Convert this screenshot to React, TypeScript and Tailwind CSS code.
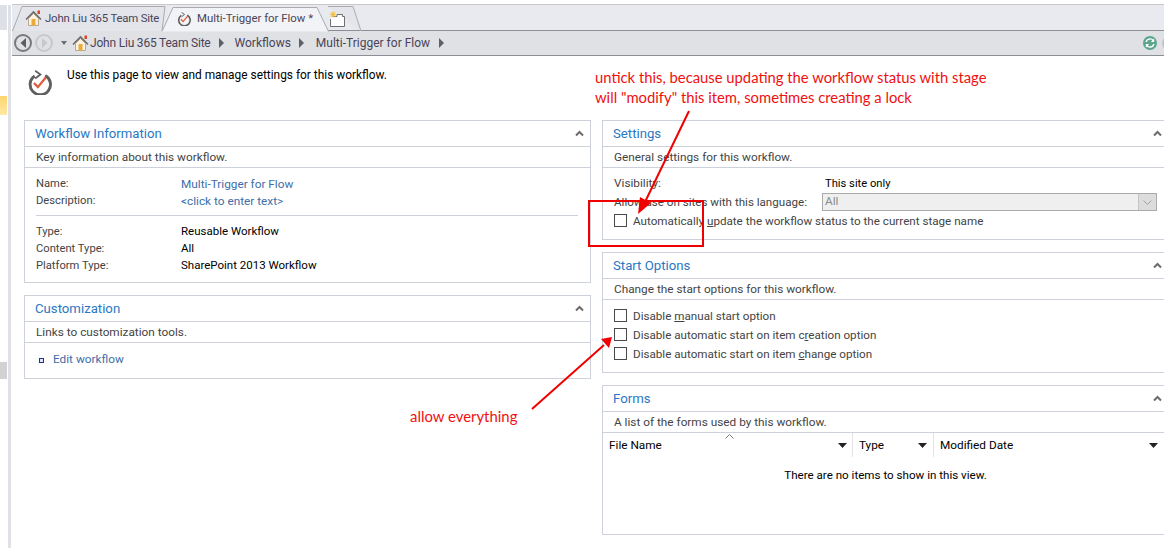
import React from "react";

const HomeIcon = () => (
  <svg width="17" height="17" viewBox="0 0 17 17">
    <path d="M3.5 8.5V15.5H13.5V8.5L8.5 3.5Z" fill="#fbf3df" stroke="#b9a98c" strokeWidth="1" />
    <rect x="6.5" y="9" width="4" height="6.5" fill="#eda93c" />
    <path d="M1 9.5L8.5 2L16 9.5" fill="none" stroke="#6d6d6d" strokeWidth="1.6" />
    <rect x="12.5" y="0.5" width="2.5" height="3.5" fill="#d9442b" />
  </svg>
);

const WorkflowIcon = ({ size }: { size: number }) => (
  <svg width={size} height={size} viewBox="0 0 26 26">
    <path d="M8 6.2A10.6 10.6 0 1 0 19 5.8" fill="none" stroke="#5f5f5f" strokeWidth="3" />
    <path d="M8.5 0.8L14 4.6L8.5 8.8" fill="none" stroke="#5f5f5f" strokeWidth="1.8" />
    <path d="M7.3 13.5L11.3 17.8L19.7 7.5" fill="none" stroke="#df5b3e" strokeWidth="2.4" />
  </svg>
);

const NewTabIcon = () => (
  <svg width="17" height="17" viewBox="0 0 17 17">
    <path d="M3.5 5.5H8V3.5H13.5V5.5H15.5V15.5H1.5V8" fill="#fff" stroke="#6f6f6f" strokeWidth="1" />
    <circle cx="4" cy="3.5" r="2.2" fill="#f8c34c" />
    <path d="M4 0V7M0.5 3.5H7.5M1.5 1L6.5 6M6.5 1L1.5 6" stroke="#f8c34c" strokeWidth="0.7" />
  </svg>
);

const Crumb = () => (
  <svg width="5" height="10" viewBox="0 0 5 10" className="shrink-0">
    <path d="M0 0L5 5L0 10Z" fill="#5d6066" />
  </svg>
);

const NavButton = ({ disabled }: { disabled?: boolean }) => (
  <span
    className={`flex h-[18px] w-[18px] items-center justify-center rounded-full border-2 ${
      disabled ? "border-[#c6c8cc]" : "border-[#77797d]"
    }`}
  >
    {disabled ? (
      <svg width="7" height="10" viewBox="0 0 7 10">
        <path d="M1 0L6.5 5L1 10Z" fill="#c6c8cc" />
      </svg>
    ) : (
      <svg width="7" height="10" viewBox="0 0 7 10">
        <path d="M6 0L0.5 5L6 10Z" fill="#5b5d61" />
      </svg>
    )}
  </span>
);

const Chevron = () => (
  <svg width="9" height="7" viewBox="0 0 9 7">
    <path d="M1 5.5L4.5 2L8 5.5" fill="none" stroke="#6c6c6c" strokeWidth="2" />
  </svg>
);

const Panel = ({
  title,
  desc,
  bodyClass,
  children,
}: {
  title: string;
  desc: string;
  bodyClass: string;
  children: React.ReactNode;
}) => (
  <section className="border border-[#cdd1d9] bg-white">
    <div className="flex h-[26px] items-center justify-between border-b border-[#cdd1d9] pl-[10px] pr-[6px]">
      <h2 className="text-[13.2px] leading-none text-[#2a78c4]">{title}</h2>
      <Chevron />
    </div>
    <p className="flex h-[21px] items-center border-b border-[#cdd1d9] pl-[11px] pt-[1px] text-[#444]">{desc}</p>
    <div className={bodyClass}>{children}</div>
  </section>
);

const Row = ({ label, value, link }: { label: string; value: string; link?: boolean }) => (
  <div className="flex h-[17px] items-center">
    <span className="w-[145px] text-[11.2px] text-[#444]">{label}</span>
    <span className={link ? "pt-[2px] text-[#3e6ea8]" : "text-[11.5px] text-black"}>{value}</span>
  </div>
);

const Check = ({ children }: { children: React.ReactNode }) => (
  <label className="flex h-[19px] items-center text-[11.65px] text-[#444]">
    <span className="mr-[6px] h-[13px] w-[13px] border border-[#4a4a4a] bg-white" />
    <span className="pt-[3px]">{children}</span>
  </label>
);

const ColHead = ({ label, className }: { label: string; className: string }) => (
  <div className={`flex h-[24px] items-center justify-between text-black ${className}`}>
    <span className="pt-[1px]">{label}</span>
    <svg width="9" height="5" viewBox="0 0 9 5">
      <path d="M0 0H9L4.5 5Z" fill="#222" />
    </svg>
  </div>
);

export default function App() {
  return (
    <div className="relative flex h-[548px] w-[1164px] overflow-hidden bg-white font-['Roboto',sans-serif] text-[11.8px] leading-none">
      {/* office nav pane stub */}
      <aside className="flex w-[12px] shrink-0 pt-[5px]">
        <div className="flex w-[7px] flex-col">
          <div className="h-[25px] bg-[#dde0e7]" />
          <div className="mt-[66px] h-[19px] bg-gradient-to-b from-[#fdd56e] to-[#ffe9a6]" />
          <div className="mt-[247px] h-[17px] bg-[#d2d2d2]" />
        </div>
        <div className="ml-[1px] w-[3px] bg-[#dfe1e7]" />
      </aside>

      <main className="min-w-0 flex-1 overflow-hidden">
        <div className="h-[5px] border-b border-[#c8c8c8]" />

        <div className="flex h-[26px] border-b border-[#8b8e93] bg-[#e8eaef] text-[11.4px] text-[#4a4458]">
          <div className="relative flex w-[154px] items-center pl-[13px]">
            <svg className="absolute left-0 top-0" width="154" height="26" viewBox="0 0 154 26">
              <path d="M0.5 26L10 1.5H153L150 26" fill="#e3e5ea" stroke="#a9abb0" />
            </svg>
            <span className="relative mt-[2px]"><HomeIcon /></span>
            <span className="relative ml-[3px] mt-[2px] whitespace-nowrap tracking-[-0.2px]">John Liu 365 Team Site</span>
          </div>
          <div className="relative z-10 -ml-[4px] flex w-[168px] items-center pl-[15px]">
            <svg className="absolute left-0 top-0" width="168" height="27" viewBox="0 0 168 27">
              <path d="M0 26.5L11 2.5H155L166.5 26.5" fill="#f2f3f6" stroke="#a9abb0" />
            </svg>
            <span className="relative mt-[3px]"><WorkflowIcon size={14} /></span>
            <span className="relative ml-[6px] mt-[2px] whitespace-nowrap">Multi-Trigger for Flow *</span>
          </div>
          <div className="relative -ml-[4px] flex w-[36px] items-center pl-[3px]">
            <svg className="absolute left-0 top-0" width="36" height="26" viewBox="0 0 36 26">
              <path d="M2 1.5H27L35 26" fill="#e3e5ea" stroke="#a9abb0" />
            </svg>
            <span className="relative mt-[3px]"><NewTabIcon /></span>
          </div>
        </div>

        <nav className="flex h-[25px] items-center border-b border-[#8b8e93] bg-[#dfe1e5] pl-[2px] text-[12px] text-[#4a4458]">
          <NavButton />
          <span className="ml-[3px]"><NavButton disabled /></span>
          <svg className="ml-[8px]" width="6" height="4" viewBox="0 0 6 4">
            <path d="M0 0H6L3 4Z" fill="#6b6d71" />
          </svg>
          <span className="ml-[5px]"><HomeIcon /></span>
          <span className="ml-[1px] tracking-[-0.2px]">John Liu 365 Team Site</span>
          <span className="ml-[8px]"><Crumb /></span>
          <span className="ml-[11px]">Workflows</span>
          <span className="ml-[8px]"><Crumb /></span>
          <span className="ml-[12px]">Multi-Trigger for Flow</span>
          <span className="ml-[9px]"><Crumb /></span>
          <svg className="ml-auto shrink-0" width="14" height="14" viewBox="0 0 14 14">
            <circle cx="7" cy="7" r="7" fill="#5aa58c" />
            <path d="M3 6A4.2 4.2 0 0 1 10.4 4.6M11 8A4.2 4.2 0 0 1 3.6 9.4" fill="none" stroke="#fff" strokeWidth="1.4" />
            <path d="M11.2 2.4V6H7.8ZM2.8 11.6V8H6.2Z" fill="#fff" />
          </svg>
          <span className="-mr-[12px] ml-[5px] h-[14px] w-[14px] shrink-0 rounded-full bg-[#c2c4c8]" />
        </nav>

        <div className="flex h-[64px] pl-[15px]">
          <span className="mt-[14px]"><WorkflowIcon size={25} /></span>
          <p className="ml-[15px] mt-[14px] text-[11.9px] text-black">Use this page to view and manage settings for this workflow.</p>
        </div>

        <div className="ml-[12px] grid w-[1145px] grid-cols-[567px_567px] gap-x-[11px]">
          <div className="flex flex-col gap-y-[12px]">
            <Panel
              title="Workflow Information"
              desc="Key information about this workflow."
              bodyClass="h-[114px] px-[11px] pt-[7px]"
            >
              <Row label="Name:" value="Multi-Trigger for Flow" link />
              <Row label="Description:" value="<click to enter text>" link />
              <div className="mb-[7px] mr-[1px] mt-[6px] h-px bg-[#cdd1d9]" />
              <Row label="Type:" value="Reusable Workflow" />
              <Row label="Content Type:" value="All" />
              <Row label="Platform Type:" value="SharePoint 2013 Workflow" />
            </Panel>
            <Panel
              title="Customization"
              desc="Links to customization tools."
              bodyClass="flex h-[35px] items-center pb-[1px] pl-[14px]"
            >
              <span className="mr-[9px] h-[5px] w-[5px] border border-[#1f2f9c] bg-[#dfe6f6]" />
              <span className="text-[#3e6ea8]">Edit workflow</span>
            </Panel>
          </div>

          <div className="flex flex-col gap-y-[12px]">
            <Panel
              title="Settings"
              desc="General settings for this workflow."
              bodyClass="h-[71px] pl-[11px] pt-[5px]"
            >
              <div className="flex h-[19px] items-center pt-[3px]">
                <span className="w-[211px] text-[#444]">Visibility:</span>
                <span className="text-[11.2px] text-black">This site only</span>
              </div>
              <div className="flex h-[19px] items-end">
                <span className="w-[208px] self-center whitespace-nowrap pt-[3px] text-[11.6px] text-[#444]">Allow use on sites with this language:</span>
                <div className="flex h-[18px] w-[335px] items-center justify-between border border-[#ababab] bg-[#efefef] pl-[2px] text-[#8b8b8b]">
                  <span>All</span>
                  <span className="flex h-full w-[18px] items-center justify-center border-l border-[#c4c4c4] bg-[#dcdcdc]">
                    <svg width="9" height="5" viewBox="0 0 9 5">
                      <path d="M0.5 0.5L4.5 4.5L8.5 0.5" fill="none" stroke="#a2a2a2" />
                    </svg>
                  </span>
                </div>
              </div>
              <Check>
                Automatically <u>u</u>pdate the workflow status to the current stage name
              </Check>
            </Panel>
            <Panel
              title="Start Options"
              desc="Change the start options for this workflow."
              bodyClass="h-[72px] pl-[11px] pt-[6px]"
            >
              <Check>
                Disable <u>m</u>anual start option
              </Check>
              <Check>
                Disable automatic start on item c<u>r</u>eation option
              </Check>
              <Check>
                Disable automatic start on item <u>c</u>hange option
              </Check>
            </Panel>
            <Panel title="Forms" desc="A list of the forms used by this workflow." bodyClass="relative h-[101px]">
              <svg className="absolute left-[122px] top-[1px]" width="9" height="5" viewBox="0 0 9 5">
                <path d="M0.5 4.5L4.5 0.5L8.5 4.5" fill="none" stroke="#777" />
              </svg>
              <div className="flex">
                <ColHead label="File Name" className="w-[250px] border-r border-[#e3e3e3] pl-[6px] pr-[5px]" />
                <ColHead label="Type" className="w-[81px] border-r border-[#e3e3e3] pl-[6px] pr-[6px]" />
                <ColHead label="Modified Date" className="w-[230px] pl-[6px] pr-[6px]" />
              </div>
              <p className="mt-[13px] text-center text-[11.6px] text-black">There are no items to show in this view.</p>
            </Panel>
          </div>
        </div>
      </main>

      {/* red annotations drawn over the page */}
      <p className="absolute left-[595px] top-[67px] font-['Lato',sans-serif] text-[14.8px] leading-[20px] text-[#f01010]">
        untick this, because updating the workflow status with stage
        <br />
        will "modify" this item, sometimes creating a lock
      </p>
      <p className="absolute left-[410px] top-[406px] font-['Lato',sans-serif] text-[14.9px] leading-[20px] text-[#f01010]">
        allow everything
      </p>
      <div className="absolute left-[588px] top-[200px] h-[47px] w-[116px] border-2 border-[#f00000]" />
      <svg className="pointer-events-none absolute left-0 top-0" width="1164" height="548" viewBox="0 0 1164 548">
        <path d="M689 111L645 202" stroke="#f00000" strokeWidth="2" fill="none" />
        <path d="M638 214L640 197L651 203Z" fill="#f00000" />
        <path d="M532 409L604 345" stroke="#f00000" strokeWidth="2" fill="none" />
        <path d="M612 337L609 348L601 339Z" fill="#f00000" />
      </svg>
    </div>
  );
}
